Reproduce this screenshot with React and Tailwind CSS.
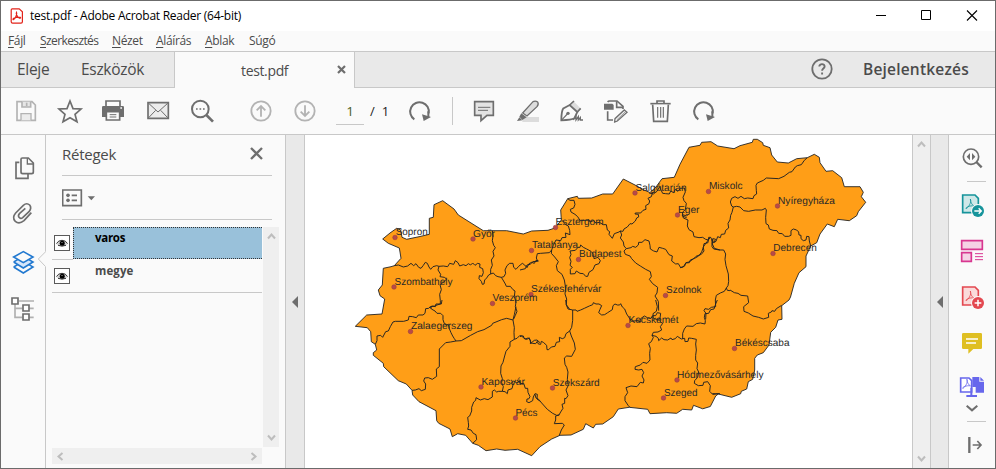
import React from "react";

const G = "#6e6e6e";
const LIGHT = "#b3b3b3";

/* Icons are drawn on a 3x grid: one CSS pixel is three drawing units. */
function Icon({ x, y, w, h, children, className = "" }) {
  return (
    <svg
      width={w}
      height={h}
      viewBox={`${x} ${y} ${w * 3} ${h * 3}`}
      className={"block shrink-0 " + className}
      fill="none"
      stroke={G}
      strokeWidth="5"
    >
      {children}
    </svg>
  );
}

const Tool = ({ x, children }) => (
  <Icon x={x} y={264} w={44} h={46}>
    {children}
  </Icon>
);

function Rotate({ cx }) {
  return (
    <g transform={`translate(${cx} 0)`}>
      <path d="M-16 358 A28 28 0 1 1 27 340" strokeWidth="6" />
      <path d="M7 343 L34 351 L12 363 Z" fill={G} stroke="none" />
      <path d="M26 334 V352" strokeWidth="6" />
    </g>
  );
}

function TitleBar() {
  return (
    <div className="flex h-[30px] items-center bg-white">
      <svg width="14" height="16" viewBox="0 0 14 16" className="ml-[9px] block" fill="none" stroke="#e2231a" strokeWidth="1.2">
        <path d="M1.6 .8h7.6l3.2 3v10q0 1.4-1.4 1.4H2.6q-1.4 0-1.4-1.4V2q0-1.2 .9-1.2z" />
        <path d="M6.5 4.3c1 1.6-1.2 6.2-3 7.3-.8.2-.6-1 .6-1.500 2-1 4.500-1.300 6.300-.7.700.5-.2 1.100-1 .7C7.600 9.200 5.600 6 6.500 4.300z" />
      </svg>
      <span className="ml-[6px] whitespace-pre text-[12px] leading-[16px] tracking-[-0.26px] text-black">
        test.pdf - Adobe Acrobat Reader (64-bit)
      </span>
      <div className="flex-1" />
      <svg width="120" height="30" viewBox="875 0 120 30" className="block" fill="none" stroke="#000" strokeWidth="1">
        <path d="M876 14.500h10" />
        <path d="M921.500 9.500h9v9h-9z" />
        <path d="M967 9.500l10 10M977 9.500l-10 10" strokeWidth="1.100" />
      </svg>
    </div>
  );
}

const MENU = [
  ["F", "ájl", "w-[32px]"],
  ["S", "zerkesztés", "w-[72px] tracking-[-0.6px]"],
  ["N", "ézet", "w-[44px]"],
  ["A", "láírás", "w-[49px]"],
  ["A", "blak", "w-[44px]"],
  ["", "Súgó", "w-[40px]"],
];

function MenuBar() {
  return (
    <div className="flex h-5 items-center bg-[#fafafa] pl-[7px] text-[12px] leading-[18px] tracking-[-0.35px] text-[#4b4b4b]">
      {MENU.map(([u, rest, w], i) => (
        <span key={i} className={"shrink-0 whitespace-nowrap " + w}>
          <span className="underline underline-offset-2">{u}</span>
          {rest}
        </span>
      ))}
    </div>
  );
}

function Tabs() {
  return (
    <div className="flex h-[37px] border-t border-[#c8c8c8] bg-[#e9e9e9] text-[#4b4b4b]">
      <div className="flex w-[173px] items-center border-b border-[#c8c8c8] pl-4 pt-px text-[15.500px]">
        <span className="w-16 tracking-[-0.3px]">Eleje</span>
        <span className="tracking-[-0.3px]">Eszközök</span>
      </div>
      <div className="flex w-[181px] items-center border-x border-[#c8c8c8] bg-[#fafafa] pl-[66px]">
        <span className="w-24 text-[14px] tracking-[-0.35px]">test.pdf</span>
        <svg width="9" height="9" viewBox="0 0 9 9" className="mb-[2px] block" stroke={G} strokeWidth="2.200">
          <path d="M1 1l7 7M8 1l-7 7" />
        </svg>
      </div>
      <div className="flex flex-1 items-center justify-end border-b border-[#c8c8c8]">
        <svg width="22" height="22" viewBox="0 0 22 22" className="mb-[2px] block" fill="none" stroke={G} strokeWidth="1.800">
          <circle cx="11" cy="11" r="9.700" />
          <path d="M8.300 8.500c.1-3.300 5.500-3 5.300.1-.1 2-2.500 2-2.500 4.200M11.100 14.400v2" strokeWidth="1.900" />
        </svg>
        <span className="ml-[30px] w-[132px] whitespace-nowrap pt-px text-[15.500px] font-semibold tracking-[0.2px]">Bejelentkezés</span>
      </div>
    </div>
  );
}

function Toolbar() {
  return (
    <div className="flex h-[47px] items-start border-b border-[#c8c8c8] bg-[#fafafa] pl-[3px]">
      <Tool x={12}>
        <g stroke={LIGHT}>
          <path d="M51 305H96L106 315V361H51Z" />
          <path d="M66 305V321H92V305" fill="#e6e6e6" />
          <path d="M80 308V318" />
          <path d="M63 361V341H93V361" fill="#ececec" strokeWidth="4" />
        </g>
      </Tool>
      <Tool x={144}>
        <path d="M210 303L219 326L243 327L225 343L231 365L210 353L189 365L195 343L177 327L201 326Z" strokeWidth="5" />
      </Tool>
      <Tool x={276}>
        <path d="M318 318V303H360V318" fill="#fafafa" />
        <path d="M306 322q0-4 4-4H368q4 0 4 4V351H306Z" fill={G} stroke="none" />
        <path d="M319 335H359V360H319Z" fill="#fafafa" />
        <path d="M329 344H349M329 351H349" strokeWidth="3" />
        <path d="M361 324h5" stroke="#fafafa" strokeWidth="4" />
      </Tool>
      <Tool x={408}>
        <path d="M444 308H505V355H444Z" fill="#ececec" />
        <path d="M446 310L474 336L503 310M446 353L467 331M503 353L482 331" strokeWidth="3" />
      </Tool>
      <Tool x={540}>
        <circle cx="601" cy="327" r="25" strokeWidth="6" />
        <path d="M619 345L639 365" strokeWidth="8" />
        <path d="M588 327h5M598.500 327h5M609 327h5" />
      </Tool>
      <div className="w-[15px] shrink-0" />
      <Tool x={717}>
        <g stroke={LIGHT} strokeWidth="5.500">
          <circle cx="783" cy="333" r="29" />
          <path d="M783 350V320M770 331L783 318L796 331" />
        </g>
      </Tool>
      <Tool x={849}>
        <g stroke={LIGHT} strokeWidth="5.500">
          <circle cx="915" cy="333" r="29" />
          <path d="M915 316V346M902 335L915 348L928 335" />
        </g>
      </Tool>
      <div className="ml-[9px] mt-3 h-[25px] w-[28px] border-b border-[#c8c8c8] text-center text-[13.500px] leading-[23px] text-[#4b6024]">1</div>
      <div className="mt-3 w-[34px] whitespace-pre pl-[6px] text-[13px] leading-[23px] text-[#222]">
        <span className="mr-[7px]">/</span>1
      </div>
      <Tool x={204}>
        <Rotate cx={269} />
      </Tool>
      <div className="ml-[10px] mr-[9px] mt-[9px] h-7 w-px bg-[#c8c8c8]" />
      <Tool x={399}>
        <path d="M437 305H493V346H474L456 362V346H437Z" fill="#e3e3e3" />
        <path d="M447 322H484M447 331H477" strokeWidth="3" />
      </Tool>
      <Tool x={531}>
        <path d="M580 351H630V366H580Z" fill="#dcdcdc" stroke="none" />
        <path d="M581 339L612 305Q619 301 626 306Q630 312 624 320L594 348Z" fill="#dcdcdc" strokeWidth="4" />
        <path d="M577 340L593 352L580 360L571 350Z" fill={G} stroke="none" />
        <path d="M571 352L580 361L564 363Z" fill={G} stroke="none" />
      </Tool>
      <Tool x={663}>
        <path d="M733 303L756 326L748 336L724 314Z" fill="#dcdcdc" stroke="none" />
        <path d="M697 361Q697 334 703 325L722 315L745 336L736 355Q728 360 697 361Z" strokeWidth="5.500" />
        <path d="M697 361L715 342" strokeWidth="3.500" />
        <circle cx="717" cy="340" r="5" fill={G} stroke="none" />
        <path d="M722 315L735 303M745 336L755 325" strokeWidth="5" />
        <path d="M733 360L741 348V360L748 350V360L754 353V360H762" strokeWidth="4" />
      </Tool>
      <Tool x={795}>
        <path d="M836 306Q838 303 842 303H864L882 319V327M836 334V360H852" />
        <path d="M863 304V322H882" strokeWidth="5" />
        <path d="M825 311H850L854 315V329H825Z" fill={G} stroke="none" />
        <path d="M886 330L894 337L865 363L857 366L858 356Z" fill="#fafafa" strokeWidth="4" />
        <path d="M863 360L889 335" strokeWidth="2" />
      </Tool>
      <Tool x={927}>
        <path d="M964 311H1025" />
        <path d="M984 310V303H1005V310" />
        <path d="M971 314L974 364H1015L1018 314" fill="#fafafa" />
        <path d="M986 321V353M995 321V353M1003 321V353" strokeWidth="3.500" />
      </Tool>
      <Tool x={1059}>
        <Rotate cx={1124} />
      </Tool>
    </div>
  );
}

function LeftRail() {
  return (
    <div className="z-10 flex w-[45px] shrink-0 flex-col border-r border-[#c8c8c8] bg-[#fafafa] pt-[9px]">
      <Icon x={3} y={42} w={44} h={48}>
        <path d="M58 97H48V145H84V132" />
        <path d="M63 88Q63 84 67 84H85L100 99V126Q100 131 95 131H68Q63 131 63 126Z" />
        <path d="M82 84V102H100" strokeWidth="4" />
      </Icon>
      <Icon x={3} y={186} w={44} h={48}>
        <path
          d="M94 248L72 272Q57 284 46 274Q35 263 47 249L70 226Q80 217 89 225Q96 234 87 245L68 263Q62 268 57 262Q53 256 59 250L76 235"
          strokeWidth="5"
        />
      </Icon>
      <Icon x={3} y={330} w={44} h={48} className="overflow-visible">
        <path d="M138 364L115 387L138 411Z" fill="#fafafa" stroke="none" />
        <path d="M136 366L115 387L136 409" stroke="#c8c8c8" strokeWidth="3" />
        <g stroke="#2279d0" strokeWidth="4.800">
          <path d="M41 411L70 429L99 411L87 404M53 404L41 411" />
          <path d="M41 396L70 414L99 396L87 389M53 389L41 396" fill="#d5e6fb" />
          <path d="M41 381L70 365L99 381L70 398Z" fill="#fafafa" />
        </g>
      </Icon>
      <Icon x={3} y={474} w={44} h={48}>
        <path d="M57 513H102M45 522V562H67M45 535H67M88 535H101M88 562H101" stroke="#b0b0b0" />
        <path d="M36 504H54V522H36ZM69 525H87V543H69ZM69 552H87V570H69Z" fill="#fff" />
      </Icon>
    </div>
  );
}

function Eye() {
  return (
    <div className="flex h-4 w-4 shrink-0 items-center justify-center border border-[#5a5a5a] bg-white">
      <svg width="12" height="8" viewBox="0 0 12 8" className="block">
        <path d="M.4 5Q2.500 1.200 6 1.200T11.600 5Q8.500 7.200 6 7.200T.4 5z" fill="#d0d0d0" />
        <path d="M.4 4.500Q2.500 1.300 6 1.300T11.600 4.500M2 6.300Q6 8 10 6.300" fill="none" stroke="#333" />
        <circle cx="6.200" cy="4.300" r="2.500" fill="#000" />
        <path d="M5.500 3h1v1h-1z" fill="#aaa" />
      </svg>
    </div>
  );
}

const Arrow = ({ d, w, h, className = "" }) => (
  <svg width={w} height={h} viewBox={`0 0 ${w} ${h}`} className={"block " + className} fill="none" stroke="#bdbdbd" strokeWidth="2">
    <path d={d} />
  </svg>
);

function LayersPanel() {
  return (
    <div className="flex w-[240px] shrink-0 flex-col border-r border-[#c8c8c8] bg-[#fafafa]">
      <div className="ml-4 flex h-[41px] w-[210px] items-center border-b border-[#c8c8c8]">
        <span className="flex-1 pb-[2px] text-[15px] tracking-[-0.25px] text-[#4b4b4b]">Rétegek</span>
        <svg width="13" height="13" viewBox="0 0 13 13" className="mb-[3px] mr-[9px] block" stroke={G} strokeWidth="2.300">
          <path d="M1 1l11 11M12 1l-11 11" />
        </svg>
      </div>
      <div className="ml-4 flex h-[44px] w-[210px] items-center border-b border-[#c8c8c8]">
        <Icon x={186} y={176} w={36} h={18}>
          <path d="M188 179H244V226H188Z" />
          <circle cx="204" cy="195" r="5.500" fill={G} stroke="none" />
          <circle cx="204" cy="210" r="5.500" fill={G} stroke="none" />
          <path d="M215 195H231M215 210H231" />
          <path d="M263 198H285L274 210Z" fill={G} stroke="none" />
        </Icon>
      </div>
      <div className="ml-[6px] mt-[7px] flex h-[220px]">
        <div className="w-[210px] text-[11.500px] font-bold leading-4">
          <div className="flex h-[33px]">
            <div className="flex h-[33px] w-[21px] border-b border-[#c8c8c8] pl-[2px] pt-2">
              <Eye />
            </div>
            <div className="h-8 w-[189px] border border-r-0 border-dotted border-[#333] bg-[#99c1da] pl-[21px] pt-[2px] tracking-[-0.3px] text-black">
              varos
            </div>
          </div>
          <div className="flex h-[33px] border-b border-[#c8c8c8] pl-[2px] pt-2">
            <Eye />
            <span className="-mt-[5px] ml-[25px] tracking-[0.1px] text-[#4b4b4b]">megye</span>
          </div>
        </div>
        <div className="ml-px flex w-4 flex-col items-center justify-between bg-[#efefef] py-[5px]">
          <Arrow w={9} h={8} d="M1 6.500L4.500 2.500L8 6.500" />
          <Arrow w={9} h={8} d="M1 1.500L4.500 5.500L8 1.500" />
        </div>
      </div>
      <div className="ml-[6px] mt-px flex h-4 w-[210px] items-center justify-between bg-[#efefef] px-[4px]">
        <Arrow w={8} h={9} d="M6.500 1L2.500 4.500L6.500 8" />
        <Arrow w={8} h={9} d="M1.500 1L5.500 4.500L1.500 8" />
      </div>
    </div>
  );
}

const Collapse = ({ className }) => (
  <div className={"flex shrink-0 items-center justify-center border-r border-[#c8c8c8] bg-[#e9e9e9] " + className}>
    <svg width="6" height="12" viewBox="0 0 6 12" className="block" fill={G}>
      <path d="M6 0v12L0 6z" />
    </svg>
  </div>
);

const COUNTRY =
  "396.7,228.3 390,233 382.7,239 388.3,243.3 399.3,248 400,252 401,258.3 394.3,265.7 391,266.700 383.3,268.3 382.3,285 378.3,290 380,295.7 384.7,299 382,314 366.7,315 355.3,326.3 367.3,327.7 370.7,331.7 371.3,341.7 375.3,344.3 376.7,350 373.3,352.7 373.3,355.3 383.3,363.3 383.7,366.7 398.3,380.7 406.3,384 412,390.3 412.7,395 419,401.7 436,410.7 436.7,420.7 438.7,423.3 450,429 452.3,436.7 457.7,433.7 465.7,435.3 472.7,443.3 478.3,445.3 486,450.7 496.7,449 505,450.3 517.7,449.3 531.7,455.7 540,446.7 551.7,439 560,435.3 571,435 583.3,429.3 585.7,423.7 593.3,428 595.7,424.3 602.7,424 613.3,416.7 618.3,409 629.3,407.3 647.7,409.3 650,413.7 666.7,412.7 676.7,413.3 682.7,409.3 691.7,410 693.5,405.3 702.7,408.800 710.3,406.5 715.7,396 718.3,394 731.7,397.3 740.7,393.7 741.3,391.3 746.7,389 748.3,381.700 752.7,379.3 754.7,370 754.7,358.3 757.3,355 763.3,352.7 769,345 770.7,332.3 775.7,327.3 778,320 782,319.3 781.7,305.7 789,300 790.500,297 794.3,283.3 799,272.7 806,266.7 806,256 810.7,246 816.7,242.7 820,234 827.3,224 834.3,226.7 837.7,219.3 849.3,220.7 856.7,215.7 858.3,211.7 865.7,202.3 861.3,196.7 863.3,192.3 860,186.7 844.3,186.7 841.7,177.7 832.7,170.7 826,171.3 820,162.7 819.3,157.3 814.3,154.3 807.3,157.7 796.7,158.7 788.3,163 777.3,162 771.7,155 770,147.7 763.3,145.3 762.7,142.7 757.3,139.3 753.3,139.3 752.3,142.3 740,145.7 734,148.7 717.7,146 711,141.7 701.7,142.3 700,145.3 689,147.3 680,164.3 674.3,177.3 662,178.700 656,187 650,192.500 644,190 635,185 623.3,179 612.7,194 602.7,194 591.7,198 578.3,198.3 577.3,196.3 567.7,198.7 560.7,210 561.3,220 555,228 548,230.3 531.7,231 523.3,234 506.7,230.7 483.3,230.7 458.3,215 454,209 442.7,200.7 434,204.7 433.3,217.3 429.3,218.3 429.3,234.3 420,236.500 406.7,239.3 402,237.3 400.700,230";

/* County borders, grouped by map section; each section has its own origin. */
const BORDERS = [
  {
    x: 340,
    y: 180,
    lines: [
      "163,257 175,255 190,261 203,258 213,250 221,257 228,251 236,262 243,265 250,256 256,247 262,250 267,261 272,268 279,260 290,257 297,259 310,258 323,260 329,250 341,253 346,242 354,248 359,258 370,254 378,257 385,251 392,255 398,249 405,256 413,250 420,252 419,262 428,266 430,278 426,289 418,287 417,296 424,304 427,313 432,312 434,300 440,294 446,285 452,282",
      "457,152 459,168 457,182 461,196 466,203 459,214 462,228 454,240 457,256 452,268 452,282 460,279 467,287 474,290 484,292",
      "484,292 492,290 497,280 495,270 501,257 509,250 519,250 521,262 528,268 536,259 547,250 554,255 561,263 567,251 575,247 583,250 588,241 596,243",
      "484,292 489,300 496,312 499,319 511,319 519,329 525,333 523,350 528,366 526,380 531,394 526,406 521,417",
      "297,259 294,270 302,283 300,290 313,292 320,297 308,309 300,314 304,329 299,343 301,362 301,372 288,376 286,380 275,378 272,385",
    ],
  },
  {
    x: 340,
    y: 300,
    lines: [
      "106,133 111,122 111,108 122,106 128,112 137,95 145,93 151,80 159,66 166,64 191,64 205,60 207,49 218,50 229,53 235,45 249,45 255,40 257,26 266,25 271,20 274,27 285,33 291,40 302,40 309,47 309,59 313,71 320,75 325,73 328,86 333,98 338,108 343,116 348,123",
      "271,20 286,18 288,12 304,12 306,0",
      "348,123 332,126 317,128 304,141 298,147 298,168 298,200 289,207 290,229 277,238 265,233 254,234 251,243 257,252 256,268 244,272 237,266 226,270 216,271",
      "348,123 364,122 392,106 413,95 432,89 455,76 458,70 485,59 500,55 519,60",
      "519,60 523,44 528,20",
      "519,60 523,83 522,97 523,118 510,126 510,139 498,154 494,168 489,187 483,198 482,220 487,236 485,248 490,260 487,274",
      "523,118 531,115 539,107 550,108 553,116 562,118 567,113 572,123 571,131 583,121 591,120 600,128",
      "487,274 476,274 470,276 463,270 457,274 457,291 444,299 433,296 421,300 408,293 407,301 401,306 395,322 395,333 389,348 383,352 385,367 386,378 383,388 393,390 400,400 408,404 410,419 398,430",
      "487,274 495,275 502,281 504,270 516,266 519,255 513,250 520,243",
      "520,243 530,248 538,243 541,251 551,250 556,265 563,265 564,277 570,290 566,297 561,297 560,305 567,308 578,302 580,291 585,281 592,283 591,297 599,303",
    ],
  },
  {
    x: 520,
    y: 300,
    lines: [
      "45,283 48,294 56,298 65,309 82,328 98,340 110,346 118,345",
      "137,0 139,15 144,27 158,30 158,61 155,82 149,93",
      "149,93 138,101 134,113 127,116 118,112 119,125 109,127 105,139 94,141 86,149 81,149 80,136 70,127 64,124 62,133 55,132 52,124 47,131 37,130 32,129 30,119 24,114 17,117 12,115 5,108 0,110",
      "149,93 154,108 163,129 166,148 155,169 140,168 133,174 135,193 140,202 144,216 142,238 145,256 138,270 144,287 138,296 134,295 134,310 126,313 129,325 122,336 117,345 107,348 107,360 103,371 127,370 133,375 124,390 118,406",
      "158,30 168,30 171,34 182,30 193,25 208,18 218,14 220,8 228,12 237,12 245,17 240,28 236,38 245,45 254,44 263,38 277,29 279,17 285,12 292,15 299,15 302,11 307,21 314,27 320,42 328,54 334,64 351,62 363,66 362,56 373,48 382,53 393,55 398,47 407,47",
      "407,0 412,20 409,34 399,41 400,55 413,59 420,55 422,40 412,38 407,47",
      "420,55 421,66 428,70 421,80 425,90 414,96 400,97 396,106 408,109 415,115 416,122 425,114 432,119 443,120 453,114 456,119 466,116 472,109 484,117 494,115 495,125 504,124 506,114 515,115 529,118 527,132 529,150 527,166 527,180 533,189 531,206 536,216 533,232 524,242 523,250 535,257 549,256 551,247 563,245 571,257 569,274 578,283 590,282 600,281",
      "396,106 400,112 394,125 386,131 391,145 389,160 390,180 381,190 369,187 361,195 346,200 345,208 356,210 366,208 371,218 366,228 372,240 370,249 361,247 351,260 333,258 318,263 323,278 315,290 315,302 325,317 330,322",
      "488,117 488,100 493,87 500,78 519,79 529,71 541,69 555,72 556,62 553,52 555,41 566,40 572,29 582,27 587,12 592,0",
    ],
  },
  {
    x: 680,
    y: 290,
    lines: [
      "150,0 163,8 174,10 183,16 203,18 206,38 191,50 192,64 205,69 219,78 236,82 250,87 266,82 265,70 274,66 276,62 284,64 289,56 305,46",
      "97,311 107,311 118,311",
    ],
  },
  {
    x: 680,
    y: 130,
    lines: [
      "382,83 373,91 364,104 352,107 346,111 336,125 328,127 312,139 296,146 259,144 250,151 232,159 228,166 229,181 230,192 222,197 219,206 203,204 193,206 183,199 174,205 165,200 155,205 151,216 155,228 160,231",
      "160,231 170,229 180,231 191,242 206,244 226,240 246,240 256,235 259,240 257,262 258,281 265,285 268,297 279,301 291,302 296,310 307,311 314,319 326,319 333,316 333,302 340,297 350,300 356,306 357,315 363,316 363,326 370,332 378,330 380,319 387,320 388,333 392,348",
      "160,231 156,247 152,256 150,270 144,280 146,294 137,301 134,312 124,313 121,323 113,320 108,334 101,338 96,330 92,322 86,322 85,330 77,328 68,322 57,323 42,320 39,306 27,299 22,288 24,270 10,264 8,254 20,258 26,252",
      "96,330 96,350 101,357 118,360 131,360 137,372 135,388 138,407 145,432 146,454 144,467 139,474 142,481 150,482",
      "139,474 133,484 121,489 109,496 106,510 107,530 94,532 86,538 75,536 72,542 78,550 77,568",
      "85,330 84,338 72,341 70,353 72,363 64,373 48,379 40,387 27,396 18,398 10,411 0,413",
      "101,338 107,328 100,326 94,330",
    ],
  },
  {
    x: 520,
    y: 130,
    lines: [
      "143,206 150,211 162,211 165,223 161,234 151,238 153,246 165,253 173,260 180,271 196,271 207,269 210,276 220,272 228,279 238,277 250,284 259,284 262,300 269,305 267,313 277,325 283,311 297,306 301,303",
      "301,303 309,304 312,297 322,291 330,281 336,282 346,273 350,264 356,261 355,253 345,252 346,249 362,249 369,241 378,238 377,227 387,221 389,213 384,205 394,200 398,187 405,186",
      "387,189 400,192 411,184 419,170 423,180 428,190 437,191 448,192 452,183 461,188 466,178 474,184 482,175 493,174 496,186 489,202 492,212 499,220 496,239 488,246 487,258 500,263",
      "301,303 305,315 301,324 310,336 312,348 319,356 312,363 316,373 330,378 335,386 347,399 361,408 377,418 391,425 394,440 388,448 398,461 413,472 411,489 405,498 415,514 416,542",
      "319,356 333,353 338,349 347,352 355,345 356,337 366,337 375,329 387,333 390,346 391,357 401,363 411,366 417,352 428,355 437,358 447,374 457,378 455,393 467,402 475,401 482,413 494,408 497,399 508,398 511,390 524,385 536,378 545,366 551,349 562,334 571,322",
      "124,270 132,277 137,284 145,288 149,301 150,314 136,309 138,322 126,323 122,332 108,330 100,346 95,360 88,368 62,370 52,371 49,384 53,394 38,395 31,403 21,405 16,416 0,420",
      "95,360 94,370 104,381 115,395 109,407 112,422 126,433 133,450 137,474 135,492 140,507 139,524 149,538",
      "150,363 166,361 174,352 180,352 182,345 190,352 200,357 213,364 221,373 222,386 234,382 241,392 237,401 225,405 219,419 207,427 203,439 197,439 190,431 180,430 169,423 165,431 151,432 151,418 157,412 150,406 153,394 149,383 153,373 150,363",
      "579,326 577,342 583,355 600,360",
    ],
  },
];

const CITIES = [
  ["Sopron", 395, 237.5, 395.7, 32],
  ["Győr", 473, 239, 473, 22],
  ["Esztergom", 555.5, 227.5, 555.5, 48],
  ["Tatabánya", 531.5, 250.5, 532, 46],
  ["Budapest", 578.5, 259.5, 579, 42.500],
  ["Salgótarján", 635, 193, 635.5, 51],
  ["Eger", 677.5, 215, 678, 21.500],
  ["Miskolc", 708.5, 191.5, 709, 33.500],
  ["Nyíregyháza", 777.5, 206, 778, 57],
  ["Debrecen", 773, 253.5, 773.3, 43.500],
  ["Szombathely", 394, 287, 394.5, 58],
  ["Veszprém", 492.5, 303.5, 492.5, 45],
  ["Székesfehérvár", 531, 294.5, 531, 70.500],
  ["Szolnok", 665.5, 295.5, 666, 35.500],
  ["Zalaegerszeg", 410.5, 331.5, 411, 61.500],
  ["Kecskemét", 628, 325.5, 628.5, 50],
  ["Békéscsaba", 734.5, 348.5, 735, 54.500],
  ["Kaposvár", 481, 387, 481.5, 43.500],
  ["Szekszárd", 552.5, 388, 552.7, 47],
  ["Hódmezővásárhely", 677, 380, 677, 86.500],
  ["Szeged", 663.5, 398, 664, 33.500],
  ["Pécs", 515.5, 418, 515.5, 22],
];

function MapPage() {
  return (
    <svg width="607" height="333" viewBox="305 135 607 333" className="block shrink-0 bg-white">
      <polygon points={COUNTRY} fill="#ff9e17" stroke="#232323" strokeWidth="0.900" strokeLinejoin="round" />
      {BORDERS.map((s, i) => (
        <g key={i} transform={`translate(${s.x} ${s.y}) scale(0.33333)`} fill="none" stroke="#232323" strokeWidth="2.900" strokeLinejoin="round">
          {s.lines.map((p, j) => (
            <polyline key={j} points={p} />
          ))}
        </g>
      ))}
      {CITIES.map(([name, cx, cy]) => (
        <circle key={name} cx={cx} cy={cy} r="2.300" fill="#b94a48" stroke="#8f3b3f" strokeWidth="0.500" />
      ))}
      {CITIES.map(([name, , cy, tx, len]) => (
        <text
          key={name}
          x={tx}
          y={cy - 2.3}
          textLength={len}
          lengthAdjust="spacingAndGlyphs"
          textRendering="geometricPrecision"
          fontSize="10.100"
          fill="#282828"
          fontFamily="'Liberation Sans', Arial, sans-serif"
        >
          {name}
        </text>
      ))}
    </svg>
  );
}

function PdfGlyph({ color }) {
  return (
    <path
      d="M211 207C216 216 204 235 198 236C196 231 212 226 222 228C219 227 211 219 211 207Z"
      stroke={color}
      strokeWidth="2.500"
      fill="none"
    />
  );
}

function RightRail() {
  return (
    <div className="flex w-[46px] shrink-0 flex-col bg-[#fafafa]">
      <Icon x={147} y={15} w={46} h={46}>
        <circle cx="213" cy="80" r="23" />
        <path d="M229 96L245 112" strokeWidth="7" />
        <path d="M210 69V91L200 80ZM216 69V91L226 80Z" fill={G} stroke="none" />
      </Icon>
      <div className="ml-[18px] h-px w-[19px] bg-[#c8c8c8]" />
      <Icon x={147} y={156} w={46} h={46}>
        <path d="M188 195H225L235 205V248H188Z" fill="#cfe8e8" stroke="#16949b" />
        <PdfGlyph color="#16949b" />
        <circle cx="234" cy="243" r="21" fill="#fafafa" stroke="none" />
        <circle cx="234" cy="243" r="18" fill="#16949b" stroke="none" />
        <path d="M223 243H243M236 235L244 243L236 251" stroke="#fff" strokeWidth="4" />
      </Icon>
      <Icon x={147} y={294} w={46} h={46}>
        <g stroke="#d83790">
          <path d="M185 332H247V358H185ZM185 368H214V394H185Z" fill="#f5d2e5" />
          <path d="M225 371H249M225 380H249M225 389H249" strokeWidth="3" />
        </g>
      </Icon>
      <Icon x={147} y={432} w={46} h={46}>
        <path d="M188 471H225L235 481V525H188Z" fill="#fadada" stroke="#e34850" />
        <g transform="translate(0 276)">
          <PdfGlyph color="#e34850" />
        </g>
        <circle cx="234" cy="519" r="21" fill="#fafafa" stroke="none" />
        <circle cx="234" cy="519" r="18" fill="#e34850" stroke="none" />
        <path d="M224 519H244M234 509V529" stroke="#fff" strokeWidth="4.500" />
      </Icon>
      <Icon x={147} y={570} w={46} h={46}>
        <path d="M186 613Q186 609 190 609H242Q246 609 246 613V653Q246 657 242 657H220L205 671V657H190Q186 657 186 653Z" fill="#dfbf22" stroke="none" />
        <path d="M198 627H234M198 639H228" stroke="#fff" strokeWidth="4" />
      </Icon>
      <Icon x={147} y={708} w={46} h={35}>
        <path d="M182 744H207L215 752V786H182Z" fill="#fff" stroke="#6767ec" />
        <g transform="translate(-4 551) scale(.97 .95)">
          <PdfGlyph color="#6767ec" />
        </g>
        <path d="M217 741H238V755H252V788H227V771H217Z" fill="#6767ec" stroke="none" />
        <path d="M241 741L252 752H241Z" fill="#6767ec" stroke="none" />
        <path d="M214 773V797M199 798H231" stroke="#6767ec" strokeWidth="6" />
      </Icon>
      <Icon x={147} y={813} w={46} h={20}>
        <path d="M200 827L216 841L232 827" strokeWidth="6" />
      </Icon>
      <div className="ml-[18px] h-px w-[19px] bg-[#c8c8c8]" />
      <Icon x={147} y={876} w={46} h={46}>
        <path d="M208 921V969" strokeWidth="7" />
        <path d="M218 945H241M232 933L243 945L232 957" />
      </Icon>
    </div>
  );
}

export default function App() {
  return (
    <div className="flex h-[469px] w-[996px] flex-col overflow-hidden border border-[#6b6b6b] bg-[#fafafa] font-['Open_Sans','Noto_Sans',sans-serif]">
      <TitleBar />
      <MenuBar />
      <Tabs />
      <Toolbar />
      <div className="flex h-[333px] shrink-0">
        <LeftRail />
        <LayersPanel />
        <Collapse className="w-[19px]" />
        <MapPage />
        <div className="flex w-[19px] shrink-0 flex-col items-center justify-between border-x border-[#c8c8c8] bg-[#efefef] py-[5px]">
          <Arrow w={9} h={8} d="M1 6.500L4.500 2.500L8 6.500" />
          <Arrow w={9} h={8} d="M1 1.500L4.500 5.500L8 1.500" />
        </div>
        <Collapse className="w-[18px]" />
        <RightRail />
      </div>
    </div>
  );
}
